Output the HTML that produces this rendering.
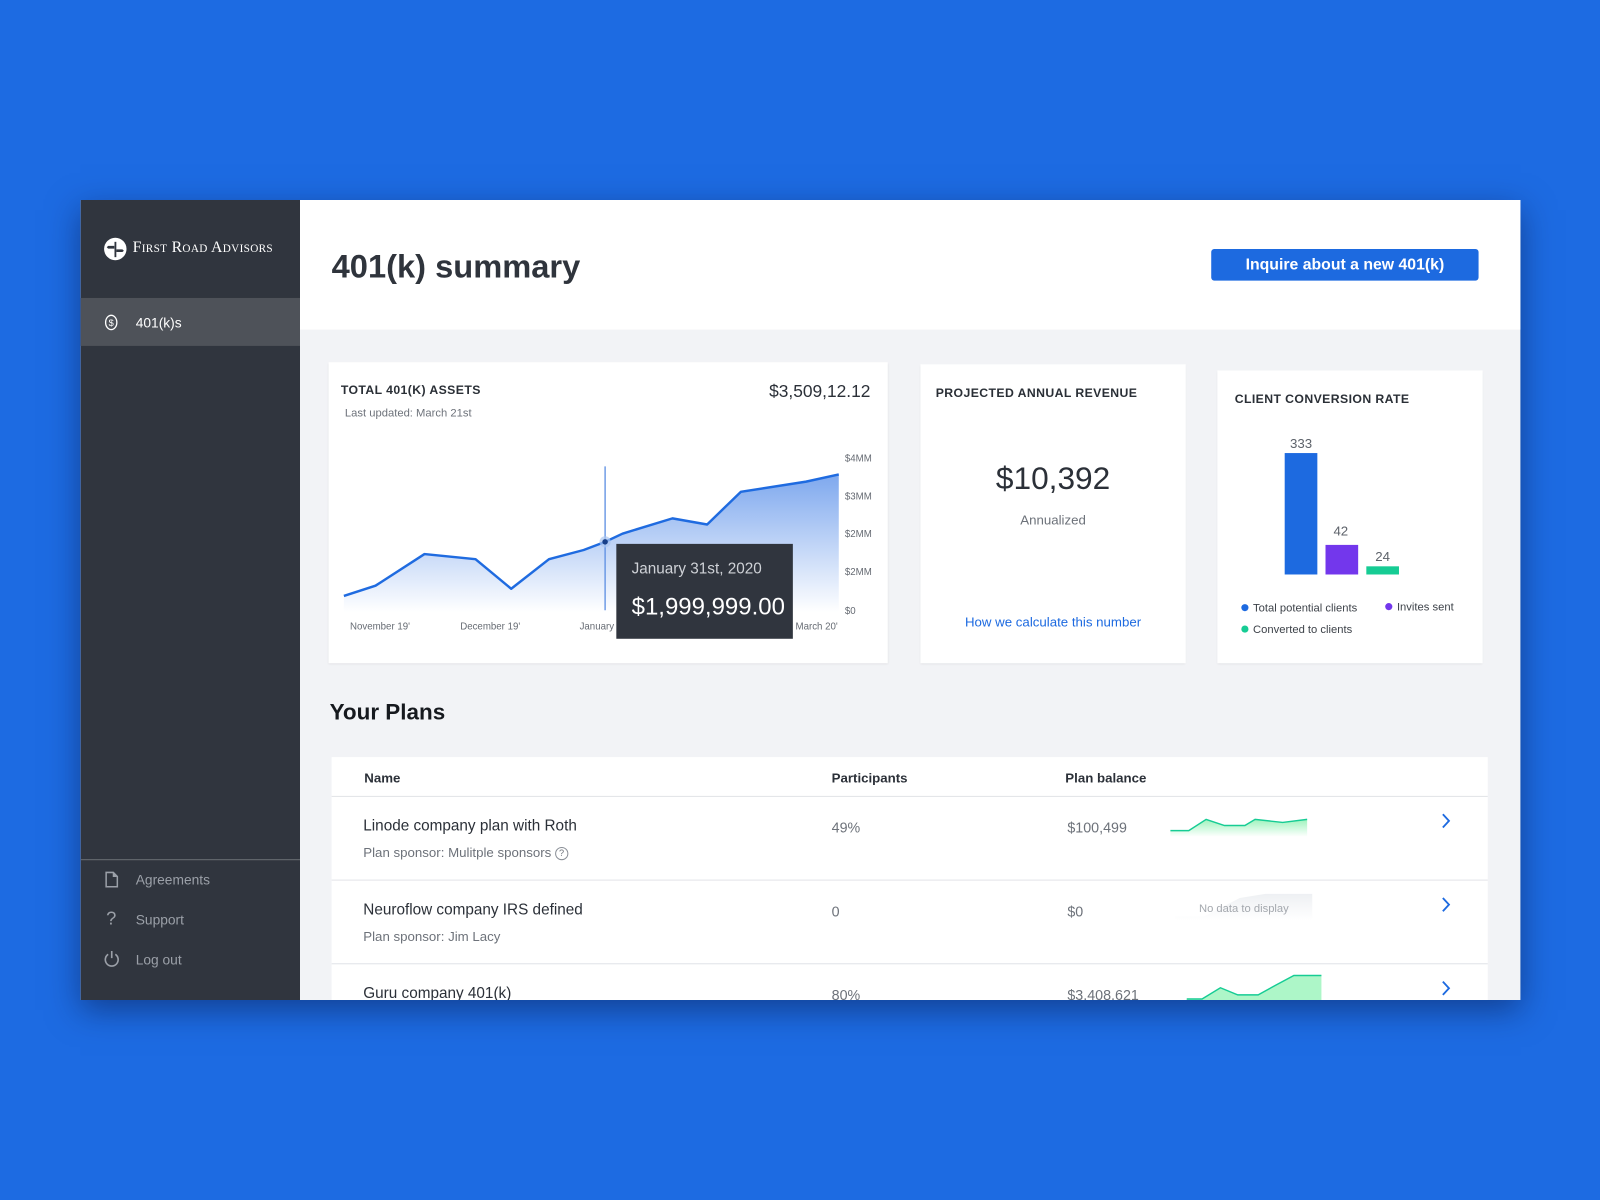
<!DOCTYPE html>
<html><head><meta charset="utf-8"><style>
*{margin:0;padding:0;box-sizing:border-box}
html,body{width:1600px;height:1200px;overflow:hidden;background:#1d6be2;font-family:"Liberation Sans",sans-serif}
#w{position:absolute;left:0;top:0;width:1568px;height:1176px;transform:scale(1.020408);transform-origin:0 0}
.a{position:absolute}
#win{left:79px;top:196px;width:1411px;height:784px;background:#f2f3f6;overflow:hidden;box-shadow:0 10px 30px rgba(10,30,80,.55)}
#side{left:0;top:0;width:215px;height:784px;background:#30353e}
#hdr{left:215px;top:0;width:1196px;height:127px;background:#fff}
.card{background:#fff;box-shadow:0 1px 2px rgba(0,0,0,.08)}
.cap{font-weight:bold;font-size:12px;letter-spacing:.4px;color:#2a2f36}
.nav{color:#9ba0a8;font-size:13.5px}
.row{left:246px;width:1133px;height:82px;background:#fff;border-top:1px solid #e2e4e8}
.nm{position:absolute;left:31px;top:20px;font-size:15px;color:#2b3038}
.sp{position:absolute;left:31px;top:47px;font-size:13px;color:#6d727a}
.pc{position:absolute;left:490px;top:22px;font-size:14px;color:#6d727a}
.bal{position:absolute;left:721px;top:22px;font-size:14px;color:#6d727a}
</style></head><body>
<div id="w">
<div id="win" class="a">
 <div id="side" class="a">
  <svg class="a" style="left:22px;top:36px" width="24" height="24" viewBox="0 0 24 24"><circle cx="12" cy="12" r="11" fill="#fff"/><rect x="11.2" y="5" width="1.8" height="15" fill="#30353e"/><path d="M5 9h6v2.6H5l-1.4-1.3z" fill="#30353e"/><path d="M13 12.4h6l1.4 1.3L19 15h-6z" fill="#30353e"/></svg>
  <div class="a" style="left:51px;top:38px;color:#fff;font-family:'Liberation Serif',serif;font-size:15.5px;letter-spacing:.3px;font-variant:small-caps">First Road Advisors</div>
  <div class="a" style="left:0;top:96px;width:215px;height:47px;background:#4e5259"></div>
  <svg class="a" style="left:23px;top:112px" width="14" height="16" viewBox="0 0 14 16"><ellipse cx="7" cy="8" rx="5.5" ry="7" fill="none" stroke="#fff" stroke-width="1.3"/><text x="7" y="11.5" font-size="9" fill="#fff" text-anchor="middle" font-family="Liberation Sans">$</text></svg>
  <div class="a" style="left:54px;top:113px;color:#fff;font-size:13.5px">401(k)s</div>
  <div class="a" style="left:0;top:646px;width:215px;height:1px;background:#6a6e75"></div>
  <svg class="a" style="left:24px;top:658px" width="13" height="16" viewBox="0 0 13 16"><path d="M1 1h7l4 4v10H1z" fill="none" stroke="#9ba0a8" stroke-width="1.5"/><path d="M7.5 1v4.5H12" fill="#9ba0a8"/></svg>
  <div class="a nav" style="left:54px;top:659px">Agreements</div>
  <div class="a nav" style="left:25px;top:694px;font-size:18px">?</div>
  <div class="a nav" style="left:54px;top:698px">Support</div>
  <svg class="a" style="left:22px;top:735px" width="17" height="17" viewBox="0 0 17 17"><path d="M5 4.2A6.3 6.3 0 1 0 12 4.2" fill="none" stroke="#9ba0a8" stroke-width="1.6"/><path d="M8.5 1v7" stroke="#9ba0a8" stroke-width="1.6"/></svg>
  <div class="a nav" style="left:54px;top:737px">Log out</div>
 </div>
 <div id="hdr" class="a">
  <div class="a" style="left:31px;top:47px;font-size:32px;font-weight:bold;color:#2f343c">401(k) summary</div>
  <div class="a" style="left:893px;top:48px;width:262px;height:31px;background:#1d6ae0;border-radius:3px;color:#fff;font-weight:bold;font-size:15.5px;text-align:center;line-height:31px">Inquire about a new 401(k)</div>
 </div>
 <div class="a card" style="left:243px;top:159px;width:548px;height:295px">
  <div class="a cap" style="left:12px;top:20px">TOTAL 401(K) ASSETS</div>
  <div class="a" style="left:16px;top:44px;font-size:11px;color:#6d727a">Last updated: March 21st</div>
  <div class="a" style="right:17px;top:19px;font-size:17px;color:#2b3038">$3,509,12.12</div>
 </div>
 <div class="a card" style="left:823px;top:161px;width:260px;height:293px">
  <div class="a cap" style="left:15px;top:21px">PROJECTED ANNUAL REVENUE</div>
  <div class="a" style="left:0;width:260px;top:94px;text-align:center;font-size:31px;color:#2b3038">$10,392</div>
  <div class="a" style="left:0;width:260px;top:145px;text-align:center;font-size:13px;color:#6d727a">Annualized</div>
  <div class="a" style="left:0;width:260px;top:245px;text-align:center;font-size:13px;color:#1d6ae0">How we calculate this number</div>
 </div>
 <div class="a card" style="left:1114px;top:167px;width:260px;height:287px">
  <div class="a cap" style="left:17px;top:21px">CLIENT CONVERSION RATE</div>
 </div>
 <div class="a" style="left:244px;top:489px;font-size:22px;font-weight:bold;color:#16191e">Your Plans</div>
 <div class="a" style="left:246px;top:546px;width:1133px;height:38px;background:#fff">
  <div class="a" style="left:32px;top:13px;font-weight:bold;font-size:13px;color:#2b3038">Name</div>
  <div class="a" style="left:490px;top:13px;font-weight:bold;font-size:13px;color:#2b3038">Participants</div>
  <div class="a" style="left:719px;top:13px;font-weight:bold;font-size:13px;color:#2b3038">Plan balance</div>
 </div>
 <div class="a row" style="top:584px"><div class="nm">Linode company plan with Roth</div><div class="sp">Plan sponsor: Mulitple sponsors <span style="display:inline-block;width:13px;height:13px;border:1px solid #8a8f97;border-radius:50%;font-size:9px;text-align:center;line-height:11px;vertical-align:1px">?</span></div><div class="pc">49%</div><div class="bal">$100,499</div></div>
 <div class="a row" style="top:666px"><div class="nm">Neuroflow company IRS defined</div><div class="sp">Plan sponsor: Jim Lacy</div><div class="pc">0</div><div class="bal">$0</div></div>
 <div class="a row" style="top:748px"><div class="nm">Guru company 401(k)</div><div class="pc">80%</div><div class="bal">$3,408,621</div></div>
</div>
<svg class="a" style="left:0;top:0" width="1568" height="1176">
 <defs>
  <linearGradient id="g1" x1="0" y1="0" x2="0" y2="1"><stop offset="0" stop-color="#7ea8ee"/><stop offset="1" stop-color="#fff"/></linearGradient>
  <linearGradient id="g2" x1="0" y1="0" x2="0" y2="1"><stop offset="0" stop-color="#9ef3bd"/><stop offset="1" stop-color="#fff"/></linearGradient>
  <linearGradient id="g4" x1="0" y1="0" x2="0" y2="1"><stop offset="0" stop-color="#eef0f3"/><stop offset="1" stop-color="#fff"/></linearGradient>
  <clipPath id="cw"><rect x="79" y="196" width="1411" height="784"/></clipPath>
 </defs>
 <path d="M337 584L368 574 416 543 466 548 501 577 538 548 572 539 593 531 610 523 659 508 693 514 726 482 790 472 822 465V600H337z" fill="url(#g1)"/>
 <path d="M337 584L368 574 416 543 466 548 501 577 538 548 572 539 593 531 610 523 659 508 693 514 726 482 790 472 822 465" fill="none" stroke="#1f6be0" stroke-width="2.4" stroke-linejoin="round"/>
 <line x1="593" y1="457" x2="593" y2="598" stroke="#5d8fe2" stroke-width="1.3"/>
 <circle cx="593" cy="531" r="5.5" fill="#a9c4f0" opacity=".7"/><circle cx="593" cy="531" r="2.7" fill="#173f88"/>
 <g font-family="Liberation Sans" font-size="9.5" fill="#666b73">
  <text x="828" y="452.5">$4MM</text><text x="828" y="489.5">$3MM</text><text x="828" y="526.5">$2MM</text><text x="828" y="563.5">$2MM</text><text x="828" y="601.5">$0</text>
  <text x="343" y="617">November 19'</text><text x="451" y="617">December  19'</text><text x="568" y="617">January</text><text x="821" y="617" text-anchor="end">March 20'</text>
 </g>
 <rect x="604" y="533" width="173" height="93" fill="#30353e"/>
 <text x="619" y="562" font-family="Liberation Sans" font-size="15" fill="#cfd2d7">January 31st, 2020</text>
 <text x="619" y="602" font-family="Liberation Sans" font-size="23.5" fill="#fff">$1,999,999.00</text>
 <rect x="1259" y="444" width="32" height="119" fill="#1d6ae0"/>
 <rect x="1299" y="534" width="32" height="29" fill="#7337ec"/>
 <rect x="1339" y="555" width="32" height="8" fill="#16cc94"/>
 <g font-family="Liberation Sans" font-size="13" fill="#5d626a" text-anchor="middle">
  <text x="1275" y="439">333</text><text x="1314" y="525">42</text><text x="1355" y="550">24</text>
 </g>
 <circle cx="1220" cy="595.5" r="3.5" fill="#1d6ae0"/><circle cx="1361" cy="594.5" r="3.5" fill="#7337ec"/><circle cx="1220" cy="616.5" r="3.5" fill="#16cc94"/>
 <g font-family="Liberation Sans" font-size="11" fill="#3d4249">
  <text x="1228" y="599.5">Total potential clients</text><text x="1369" y="598.5">Invites sent</text><text x="1228" y="620.5">Converted to clients</text>
 </g>
 <path d="M1147 814L1165 814 1182 803 1200 809 1220 809 1230 803 1257 806 1281 803V820H1147z" fill="url(#g2)"/>
 <path d="M1147 814L1165 814 1182 803 1200 809 1220 809 1230 803 1257 806 1281 803" fill="none" stroke="#16cc94" stroke-width="1.4"/>
 <path d="M1152 898L1180 898 1215 880 1240 876 1286 876V902H1152z" fill="url(#g4)"/>
 <text x="1219" y="894" font-family="Liberation Sans" font-size="11" fill="#a4a8ae" text-anchor="middle">No data to display</text>
 <g clip-path="url(#cw)">
  <path d="M1163 979L1178 979 1196 968 1213 975 1233 975 1251 965 1268 956 1295 956V985H1163z" fill="#adf6c8"/>
  <path d="M1163 979L1178 979 1196 968 1213 975 1233 975 1251 965 1268 956 1295 956" fill="none" stroke="#16cc94" stroke-width="1.4"/>
  <path d="M1414 798l6 6.5-6 6.5M1414 880l6 6.5-6 6.5M1414 962l6 6.5-6 6.5" fill="none" stroke="#1d6ae0" stroke-width="1.8"/>
 </g>
</svg>
</div>
</body></html>
